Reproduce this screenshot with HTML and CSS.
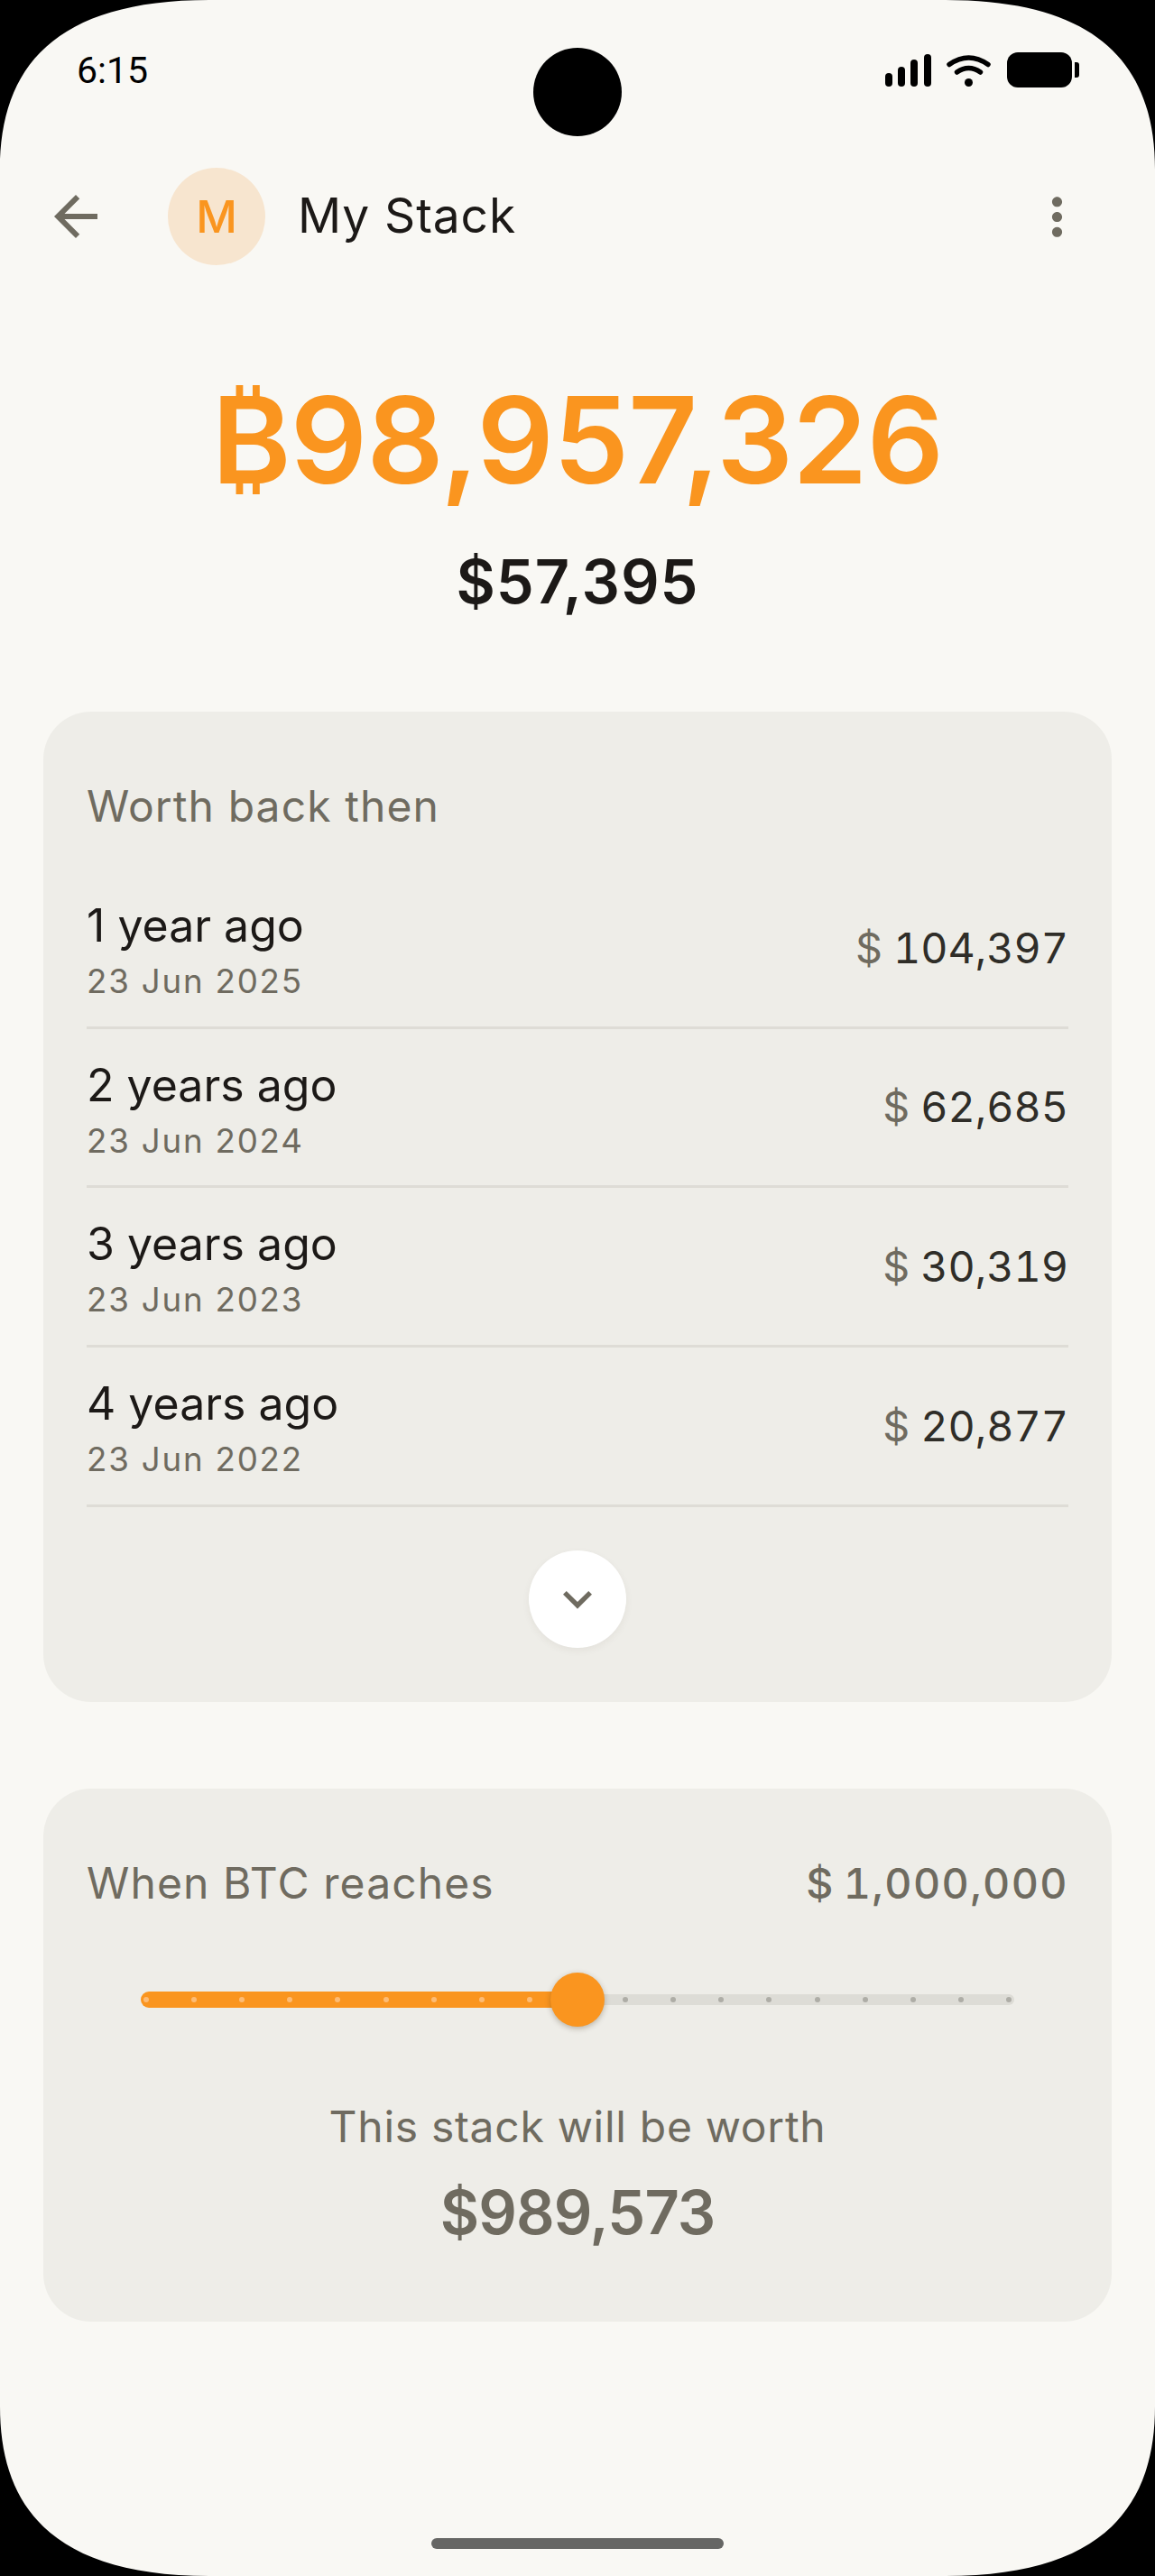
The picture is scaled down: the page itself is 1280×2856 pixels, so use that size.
FILE: index.html
```html
<!DOCTYPE html>
<html lang="en">
<head>
<meta charset="utf-8">
<title>My Stack</title>
<link rel="stylesheet" href="styles.css">
</head>
<body>
<main class="phone">
  <div class="camera"></div>

  <div class="status">
    <span class="clock">6:15</span>
    <div class="status-icons">
      <svg class="signal" width="51" height="36" viewBox="0 0 51 36">
        <rect x="0" y="21" width="8" height="15" rx="4"/>
        <rect x="14" y="14" width="8" height="22" rx="4"/>
        <rect x="28" y="6" width="8" height="30" rx="4"/>
        <rect x="43" y="0" width="8" height="36" rx="4"/>
      </svg>
      <svg class="wifi" width="49" height="36" viewBox="0 0 49 36">
        <path d="M3 11.5Q24.5-3.500 46 11.5M11.500 20Q24.500 11 37.500 20" fill="none" stroke="#000" stroke-width="5.500" stroke-linecap="round"/>
        <circle cx="24.500" cy="31.500" r="4.500"/>
      </svg>
      <svg class="battery" width="80" height="39" viewBox="0 0 80 39">
        <rect x="0" y="0" width="72" height="39" rx="12"/>
        <path d="M75 11h2a3 3 0 0 1 3 3v11a3 3 0 0 1-3 3h-2z"/>
      </svg>
    </div>
  </div>

  <header class="topbar">
    <svg class="icon-back" width="72" height="72" viewBox="0 0 24 24"><path d="M20 11H7.830l5.590-5.590L12 4l-8 8 8 8 1.410-1.410L7.830 13H20v-2z"/></svg>
    <div class="avatar">M</div>
    <h1 class="title">My Stack</h1>
    <svg class="icon-more" width="67" height="67" viewBox="0 0 24 24"><path d="M12 8c1.100 0 2-.9 2-2s-.9-2-2-2-2 .9-2 2 .9 2 2 2zm0 2c-1.100 0-2 .9-2 2s.9 2 2 2 2-.9 2-2-.9-2-2-2zm0 6c-1.100 0-2 .9-2 2s.9 2 2 2 2-.9 2-2-.9-2-2-2z"/></svg>
  </header>

  <section class="hero">
    <div class="sats">₿98,957,326</div>
    <div class="fiat">$57,395</div>
  </section>

  <section class="card history">
    <h2 class="card-title">Worth back then</h2>
    <div class="row">
      <div class="when"><div class="ago">1 year ago</div><div class="date">23 Jun 2025</div></div>
      <div class="value"><span class="sign">$</span>104,397</div>
    </div>
    <div class="row">
      <div class="when"><div class="ago">2 years ago</div><div class="date">23 Jun 2024</div></div>
      <div class="value"><span class="sign">$</span>62,685</div>
    </div>
    <div class="row">
      <div class="when"><div class="ago">3 years ago</div><div class="date">23 Jun 2023</div></div>
      <div class="value"><span class="sign">$</span>30,319</div>
    </div>
    <div class="row">
      <div class="when"><div class="ago">4 years ago</div><div class="date">23 Jun 2022</div></div>
      <div class="value"><span class="sign">$</span>20,877</div>
    </div>
    <div class="expand">
      <svg width="64" height="64" viewBox="0 0 24 24"><path d="M16.590 8.590 12 13.170 7.410 8.590 6 10l6 6 6-6z"/></svg>
    </div>
  </section>

  <section class="card forecast">
    <div class="forecast-head">
      <h2 class="card-title">When BTC reaches</h2>
      <div class="target"><span class="target-sign">$</span>1,000,000</div>
    </div>
    <div class="slider">
      <div class="fill"></div>
      <div class="rest"></div>
      <div class="ticks">
        <i class="on"></i><i class="on"></i><i class="on"></i><i class="on"></i><i class="on"></i><i class="on"></i><i class="on"></i><i class="on"></i><i class="on"></i>
        <i class="hidden"></i>
        <i></i><i></i><i></i><i></i><i></i><i></i><i></i><i></i><i></i>
      </div>
      <div class="thumb"></div>
    </div>
    <p class="worth-label">This stack will be worth</p>
    <div class="worth">$989,573</div>
  </section>

  <div class="home-bar"></div>

  <!-- display corners -->
  <svg class="corners" width="1280" height="2856" viewBox="0 0 1280 2856">
    <path d="M0 0H232C60 0 0 75 0 188Z"/>
    <path d="M1280 0H1048C1220 0 1280 75 1280 188Z"/>
    <path d="M0 2856H232C60 2856 0 2781 0 2668Z"/>
    <path d="M1280 2856H1048C1220 2856 1280 2781 1280 2668Z"/>
  </svg>
</main>
</body>
</html>
```
FILE: styles.css
```css
* { box-sizing: border-box; }

html, body {
  margin: 0;
  background: #000;
}

.phone {
  position: relative;
  width: 1280px;
  height: 2856px;
  overflow: hidden;
  background: #f9f8f4;
  font-family: Inter, "Liberation Sans", sans-serif;
  color: #1c1917;
}

.camera {
  position: absolute;
  left: 591px;
  top: 53px;
  width: 98px;
  height: 98px;
  border-radius: 50%;
  background: #000;
}

.corners {
  position: absolute;
  left: 0;
  top: 0;
  pointer-events: none;
}

/* status bar */
.status {
  height: 186px;
  padding: 55px 84px 0 85px;
  display: flex;
  justify-content: space-between;
  align-items: flex-start;
}

.clock {
  font-family: Roboto, sans-serif;
  font-size: 41px;
  line-height: 46px;
  color: #000;
}

.status-icons {
  display: flex;
  align-items: flex-start;
  margin-top: 3px;
}

.signal { margin-top: 2px; margin-right: 17px; }
.wifi { margin-top: 2px; margin-right: 18px; }

/* top bar */
.topbar {
  height: 108px;
  padding: 0 75px 0 48px;
  display: flex;
  align-items: center;
}

.icon-back, .icon-more { fill: #6f6b60; }

.avatar {
  width: 108px;
  height: 108px;
  margin-left: 66px;
  border-radius: 50%;
  background: #f7e5cf;
  color: #fa951f;
  font-size: 50px;
  font-weight: 550;
  display: flex;
  align-items: center;
  justify-content: center;
}

.title {
  margin: -3px auto 0 36px;
  font-size: 53.300px;
  line-height: 64px;
  font-weight: 400;
  letter-spacing: 0.900px;
}

/* balance */
.hero { text-align: center; }

.sats {
  margin-top: 114px;
  font-size: 133.300px;
  line-height: 160px;
  font-weight: 600;
  letter-spacing: -0.700px;
  color: #fa951f;
}

.fiat {
  margin-top: 37px;
  font-size: 66.700px;
  line-height: 80px;
  font-weight: 600;
  letter-spacing: 1px;
}

/* cards */
.card {
  margin: 0 48px;
  padding: 75px 48px 0;
  background: #eeede8;
  border-radius: 53px;
}

.card-title {
  margin: 0;
  font-size: 48px;
  line-height: 60px;
  font-weight: 400;
  letter-spacing: 1.100px;
  color: #6f6b60;
}

.history {
  margin-top: 104px;
  height: 1098px;
}

.history .card-title { margin-bottom: 40px; }

.row {
  height: 176.670px;
  display: flex;
  justify-content: space-between;
  align-items: center;
  border-bottom: 3px solid #dedcd6;
}

.when {
  align-self: flex-start;
  padding-top: 32px;
}

.ago {
  font-size: 50px;
  line-height: 60px;
}

.date {
  margin-top: 8px;
  font-size: 36.670px;
  line-height: 48px;
  letter-spacing: 1.800px;
  color: #6f6b60;
}

.value {
  font-size: 46.670px;
  line-height: 60px;
  font-weight: 400;
  font-variant-numeric: tabular-nums;
  color: #2f2d28;
}

.sign {
  margin-right: 12px;
  color: #6f6b60;
}

.expand {
  width: 108px;
  height: 108px;
  margin: 48px auto 0;
  border-radius: 50%;
  background: #fff;
  box-shadow: 0 3px 8px rgba(60, 50, 30, 0.06);
  display: flex;
  align-items: center;
  justify-content: center;
  fill: #6f6b60;
}

/* price target */
.forecast {
  margin-top: 96px;
  height: 591px;
}

.forecast-head {
  display: flex;
  justify-content: space-between;
  align-items: center;
}

.target {
  font-size: 46.670px;
  line-height: 60px;
  font-weight: 500;
  font-variant-numeric: tabular-nums;
  letter-spacing: 1.400px;
  color: #6f6b60;
}

.target-sign { margin-right: 10px; }

.slider {
  position: relative;
  height: 60px;
  margin: 69px 60px 0;
  display: flex;
  align-items: center;
}

.fill {
  width: 484px;
  height: 18px;
  border-radius: 9px 0 0 9px;
  background: #fa951f;
}

.rest {
  flex: 1;
  height: 12px;
  border-radius: 0 6px 6px 0;
  background: #dddcd6;
}

.ticks {
  position: absolute;
  left: 3px;
  right: 3px;
  top: 27px;
  display: flex;
  justify-content: space-between;
}

.ticks i {
  width: 6px;
  height: 6px;
  border-radius: 50%;
  background: #aeada6;
}

.ticks .on { background: #fdbb74; }
.ticks .hidden { background: transparent; }

.thumb {
  position: absolute;
  left: 454px;
  top: 0;
  width: 60px;
  height: 60px;
  border-radius: 50%;
  background: #fa951f;
  box-shadow: 0 2px 6px rgba(60, 40, 10, 0.3);
}

.worth-label {
  margin: 81px 0 0;
  text-align: center;
  font-size: 48px;
  line-height: 60px;
  letter-spacing: 0.700px;
  color: #6f6b60;
}

.worth {
  margin-top: 25px;
  text-align: center;
  font-size: 66.700px;
  line-height: 80px;
  font-weight: 600;
  letter-spacing: -0.900px;
  color: #6f6b60;
}

.home-bar {
  width: 324px;
  height: 12px;
  margin: 240px auto 0;
  border-radius: 6px;
  background: #666664;
}
```
